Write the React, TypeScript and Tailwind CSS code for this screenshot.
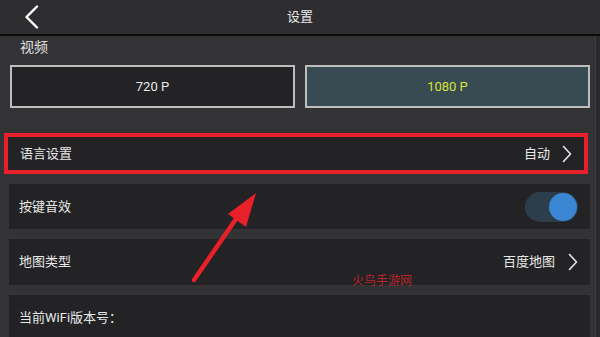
const font = { fontFamily: '"Roboto", "Noto Sans CJK SC", sans-serif' };

function Chevron({ className = "" }: { className?: string }) {
  return (
    <svg className={className} width="10" height="18" viewBox="0 0 10 18" fill="none">
      <path d="M1.5 1.5 L8.5 9 L1.5 16.5" stroke="currentColor" strokeWidth="1.6" strokeLinecap="round" strokeLinejoin="round" />
    </svg>
  );
}

function Row({
  label,
  children,
  className = "",
}: {
  label: string;
  children?: React.ReactNode;
  className?: string;
}) {
  return (
    <div
      className={`flex items-center justify-between bg-[#232325] pl-[10px] pr-[12px] text-[13px] text-[#e8e8e8] ${className}`}
    >
      <span>{label}</span>
      <div className="flex items-center">{children}</div>
    </div>
  );
}

export default function App() {
  return (
    <div
      className="relative flex h-[337px] w-[600px] flex-col overflow-hidden bg-[#333335]"
      style={font}
    >
      {/* Header */}
      <div className="grid h-[36px] shrink-0 grid-cols-[60px_1fr_60px] items-center border-b-2 border-[#0c0c0c] bg-[#2e2e30]">
        <svg className="ml-[24px] text-white" width="16" height="24" viewBox="0 0 16 24" fill="none">
          <path d="M13 1.5 L2.5 12 L13 22.5" stroke="currentColor" strokeWidth="2.4" strokeLinecap="round" strokeLinejoin="round" />
        </svg>
        <p className="text-center text-[13px] text-[#e8e8e8]">设置</p>
        <div />
      </div>

      <div className="flex flex-1">
        <div className="flex flex-1 flex-col">
          <p className="pl-[20px] pt-[1px] text-[14px] leading-[20px] text-[#e0e0e0]">视频</p>

          <div className="mt-[8px] flex gap-[10px] pl-[10px] pr-[5px]">
            <button className="h-[43px] flex-1 border-2 border-[#bdbdbd] bg-[#232325] text-[13px] text-[#e8e8e8]">
              720 P
            </button>
            <button className="h-[43px] flex-1 border-2 border-[#bdbdbd] bg-[#384a52] text-[13px] text-[#d8e33a]">
              1080 P
            </button>
          </div>

          <div className="mt-[25px] flex flex-col gap-[10px]">
            <Row
              label="语言设置"
              className="ml-[4px] mr-[7px] h-[41px] border-4 border-[#e8202a] pl-[12px] pr-[6px]"
            >
              <span>自动</span>
              <Chevron className="ml-[12px]" />
            </Row>
            <Row label="按键音效" className="ml-[9px] mr-[5px] h-[45px]">
              <div className="relative h-[30px] w-[53px] rounded-full bg-[#2c3d4c]">
                <div className="absolute right-[1px] top-[1px] size-[28px] rounded-full bg-[#3a86d2]" />
              </div>
            </Row>
            <Row label="地图类型" className="ml-[9px] mr-[5px] h-[46px]">
              <span>百度地图</span>
              <Chevron className="ml-[13px]" />
            </Row>
            <Row label="当前WiFi版本号：" className="ml-[9px] mr-[5px] h-[45px]" />
          </div>
        </div>
        {/* scrollbar strip */}
        <div className="w-[5px] border-l border-[#3c3c3e] bg-[#2a2a2c]" />
      </div>

      {/* annotation arrow */}
      <svg className="absolute left-0 top-0" width="600" height="337">
        <line
          x1="194"
          y1="280"
          x2="238"
          y2="216"
          stroke="#e8202a"
          strokeWidth="4.5"
          strokeLinecap="round"
        />
        <polygon points="256,193 228,214 246,227" fill="#e8202a" />
      </svg>

      <span
        className="absolute left-[352px] top-[271px] text-[12px] text-[#b8242c]"
        style={{ fontFamily: '"Noto Sans CJK SC", sans-serif' }}
      >
        火鸟手游网
      </span>
    </div>
  );
}
